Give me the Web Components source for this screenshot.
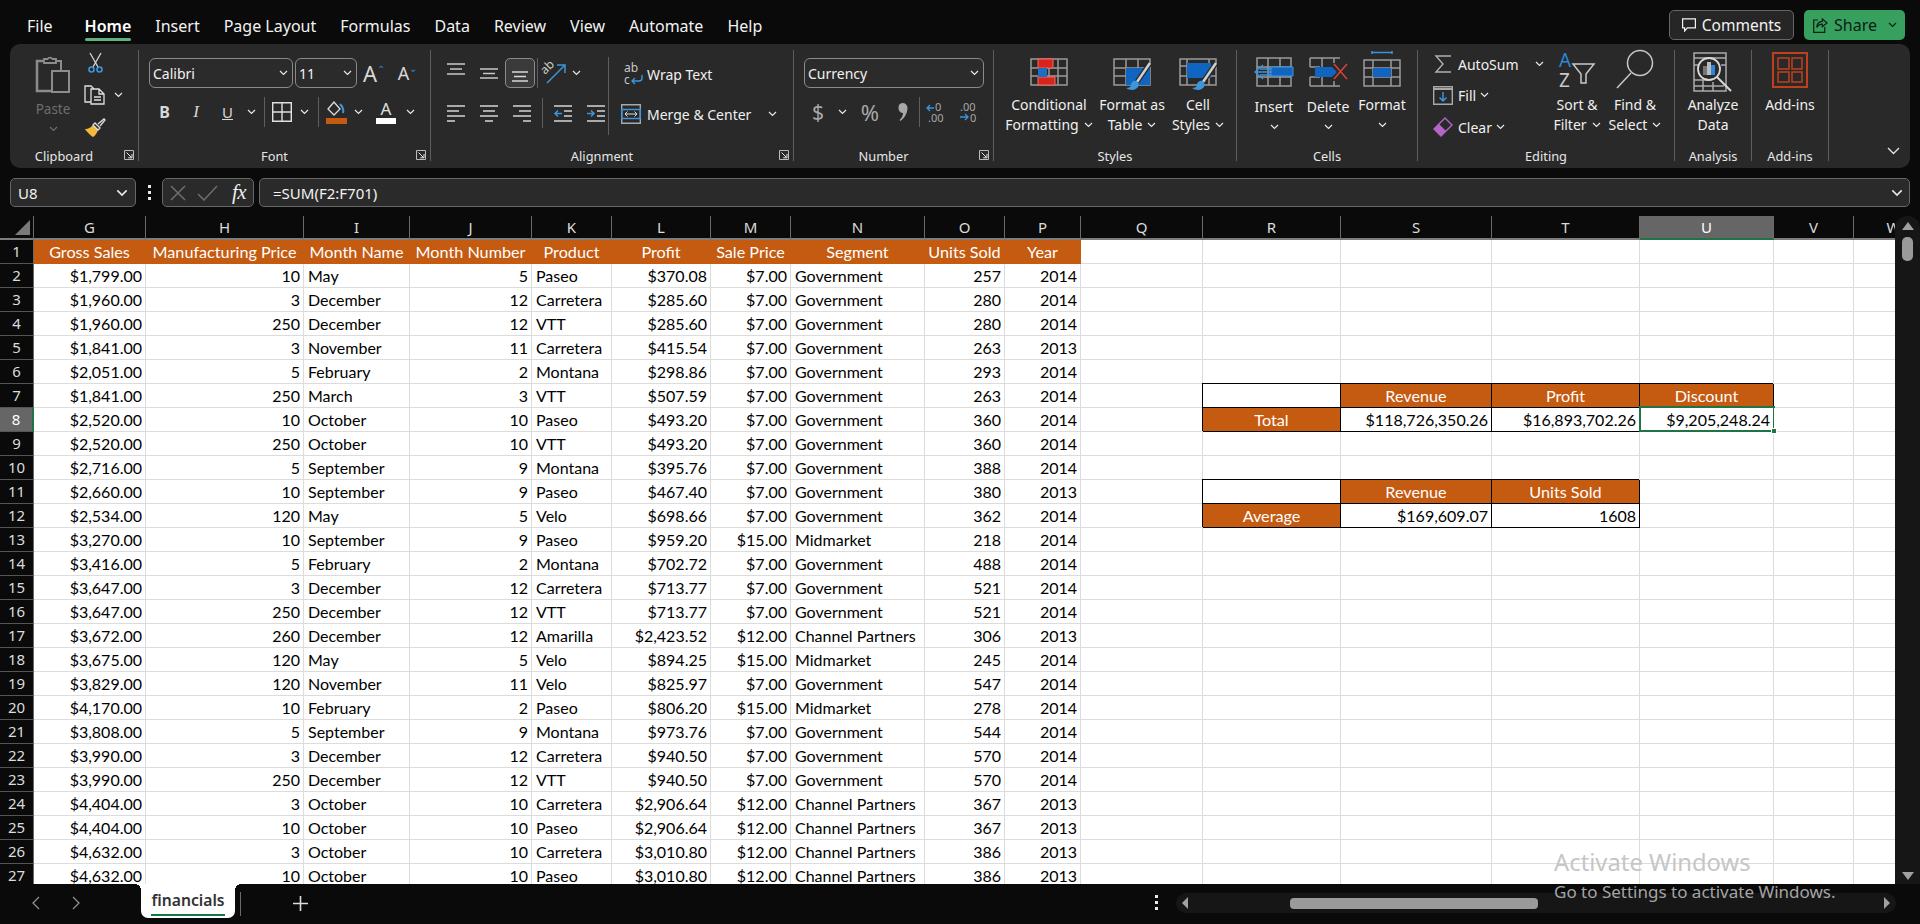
<!DOCTYPE html>
<html>
<head>
<meta charset="utf-8">
<title>financials - Excel</title>
<style>
  html, body { margin: 0; height: 924px; background: #0a0a0a; overflow: hidden; }
  body { position: relative; display: flex; flex-direction: column; font-family: "Noto Sans", "Open Sans", sans-serif; color: #f0f0f0; font-size: 14px; }

  /* ribbon content lives in the light DOM and is passed through slots */
  .rowgrid { display: grid; align-items: center; justify-items: center; height: 30px; }
  .sep { width: 1px; height: 30px; background: #5e5e5e; }
  .line { display: flex; align-items: center; }
  .stack { display: flex; flex-direction: column; }
  .glyph { font-size: 15px; line-height: 30px; color: #d8d8d8; }
  svg { display: block; overflow: visible; }
  svg text { font-family: "Noto Sans", sans-serif; }
  .selbox { width: 30px; height: 30px; box-sizing: border-box; border: 1px solid #8c8c8c; border-radius: 5px; background: #3a3a3a; display: flex; align-items: center; justify-content: center; }
</style>
</head>
<body>

<template id="titlebar-tpl">
  <style>
    :host { display: flex; align-items: flex-start; height: 44px; flex: none; color: #f2f2f2; }
    nav { display: flex; padding-left: 27px; }
    nav span { position: relative; font-size: 16px; line-height: 52px; height: 44px; margin-right: 24px; white-space: nowrap; }
    nav span.first { margin-right: 32px; }
    nav span.on { font-weight: 600; color: #fff; }
    nav span.on::after { content: ""; position: absolute; left: 0; right: 0; top: 38px; height: 3px; border-radius: 2px; background: #5fb37c; }
    .right { margin-left: auto; display: flex; gap: 10px; padding: 10px 15px 0 0; }
    .btn { height: 30px; box-sizing: border-box; display: flex; align-items: center; border-radius: 5px; font-size: 15.500px; }
    .comments { width: 125px; justify-content: center; gap: 6px; background: #262626; border: 1px solid #666; color: #f2f2f2; }
    .share { width: 101px; background: #37a05f; color: #0c2014; padding-left: 9px; gap: 6px; font-size: 16px; }
    .share b { font-weight: 400; }
    .share xl-chev { margin-left: 5px; --chev: #0c2014; }
  </style>
  <nav>
    <span class="first">File</span><span class="on">Home</span><span>Insert</span><span>Page Layout</span><span>Formulas</span><span>Data</span><span>Review</span><span>View</span><span>Automate</span><span>Help</span>
  </nav>
  <div class="right">
    <div class="btn comments">
      <svg width="14" height="14" viewBox="0 0 14 14" fill="none" stroke="#f2f2f2" stroke-width="1.2"><path d="M.6.8h12.8v9H5.4L2.6 13v-3.2h-2z"/></svg>
      Comments
    </div>
    <div class="btn share">
      <svg width="15" height="15" viewBox="0 0 15 15" fill="none" stroke="#0c2014" stroke-width="1.2"><path d="M5 2H.7v12.3h11V9"/><path d="M14 5 9.3.9v2.5C6 3.5 4 6 3.8 9.5c1.3-2.4 3-3.4 5.5-3.3v2.6z"/></svg>
      <b>Share</b><xl-chev></xl-chev>
    </div>
  </div>
</template>

<template id="ribbon-tpl">
  <style>
    :host { display: flex; flex: none; position: relative; height: 124px; margin: 0 10px; box-sizing: border-box; padding-top: 6px; background: #292929; border-radius: 10px; color: #f0f0f0; }
    .collapse { margin: 97px 0 0 58px; }
  </style>
  <slot></slot>
  <svg class="collapse" width="13" height="8" viewBox="0 0 13 8" fill="none" stroke="#e6e6e6" stroke-width="1.3"><path d="M1 1l5.500 5.500L12 1"/></svg>
</template>

<template id="group-tpl">
  <style>
    :host { display: flex; flex-direction: column; flex: none; height: 111px; box-sizing: border-box; border-right: 1px solid #5e5e5e; }
    .body { height: 99px; flex: none; }
    .foot { height: 14px; flex: none; display: grid; grid-template-columns: 1fr; align-items: center; font-size: 12.800px; line-height: 14px; text-align: center; color: #e6e6e6; white-space: nowrap; }
    :host([launcher]) .foot { grid-template-columns: 1fr 20px; }
    .launch { display: none; }
    :host([launcher]) .launch { display: block; margin: -3px 0 0 6px; }
  </style>
  <div class="body"><slot></slot></div>
  <div class="foot">
    <span id="label"></span>
    <svg class="launch" width="10" height="10" viewBox="0 0 10 10" fill="none" stroke="#bcbcbc" stroke-width="1"><path d="M.5 9.500V.5h9v9z"/><path d="M2.500 2.500l5 5M8 4v3.800H4.200" stroke="#e8e8e8"/></svg>
  </div>
</template>

<template id="big-tpl">
  <style>
    :host { display: flex; flex-direction: column; align-items: center; flex: none; font-size: 14px; line-height: 20px; color: #f0f0f0; text-align: center; white-space: nowrap; }
    .icon { height: 45px; display: flex; align-items: flex-start; justify-content: center; padding-top: 4px; box-sizing: border-box; width: 100%; }
    .l { display: flex; align-items: center; gap: 5px; height: 20px; }
  </style>
  <div class="icon"><slot></slot></div>
  <div class="l" id="a"></div>
  <div class="l" id="b"></div>
</template>

<template id="select-tpl">
  <style>
    :host { display: flex; align-items: center; flex: none; height: 30px; box-sizing: border-box; border: 1px solid #8a8a8a; border-radius: 6px; padding: 0 4px 0 3px; font-size: 14px; color: #f2f2f2; background: #2b2b2b; }
    span { flex: 1; }
  </style>
  <span><slot></slot></span><xl-chev></xl-chev>
</template>

<template id="formula-tpl">
  <style>
    :host { display: flex; flex: none; height: 29px; margin: 10px 10px 9px; font-size: 15px; color: #f2f2f2; }
    .box { box-sizing: border-box; height: 29px; border: 1px solid #676767; border-radius: 5px; background: #2a2a2a; display: flex; align-items: center; }
    .name { width: 126px; padding: 0 7px; justify-content: space-between; }
    .dots { width: 26px; display: flex; flex-direction: column; align-items: center; justify-content: center; gap: 3px; }
    .dots i { width: 3px; height: 3px; background: #e8e8e8; }
    .acts { width: 92px; padding-left: 7px; }
    .fx { font-family: "Liberation Serif", serif; font-style: italic; font-size: 21px; margin-left: 14px; color: #ececec; letter-spacing: -.5px; }
    .input { flex: 1; margin-left: 5px; padding: 0 6px 0 13px; justify-content: space-between; }
  </style>
  <div class="box name">U8<xl-chev style="--chev-w:12px"></xl-chev></div>
  <div class="dots"><i></i><i></i><i></i></div>
  <div class="box acts">
    <svg width="16" height="16" viewBox="0 0 16 16" stroke="#6e6e6e" stroke-width="1.5"><path d="M1 1l14 14M15 1 1 15"/></svg>
    <svg style="margin-left:11px" width="21" height="16" viewBox="0 0 21 16" fill="none" stroke="#6e6e6e" stroke-width="1.5"><path d="M1 9l6 6L20 1"/></svg>
    <span class="fx">fx</span>
  </div>
  <div class="box input">=SUM(F2:F701)<xl-chev style="--chev-w:12px"></xl-chev></div>
</template>

<template id="sheet-tpl">
  <style>
    :host { display: flex; flex: none; height: 668px; overflow: hidden; font-family: Lato, "Liberation Sans", sans-serif; font-size: 16px; color: #000; }
    .wrap { width: 1895px; height: 668px; overflow: hidden; flex: none; background: #fff; }
    .grid { display: grid; grid-template-columns: 34px 112px 158px 106px 122px 80px 99px 80px 134px 80px 76px 122px 138px 151px 148px 134px 80px 80px; grid-auto-rows: 24px; width: 2056px; }
    .c { box-sizing: border-box; border-right: 1px solid #dcdcdc; border-bottom: 1px solid #dcdcdc; padding: 0 3px 0 4px; line-height: 23px; white-space: nowrap; background: #fff; position: relative; }
    .r { text-align: right; }
    .o { background: #c55a11; color: #fff; text-align: center; border-color: #c55a11; padding: 0; font-size: 16.200px; }
    .b { border-color: #000; box-shadow: -1px -1px 0 #000; }
    .ch, .rh { background: #0a0a0a; color: #dcdcdc; font-family: "Noto Sans", sans-serif; font-size: 15px; text-align: center; padding: 0; box-sizing: border-box; }
    .ch { border-right: 1px solid #6a6a6a; border-bottom: 2px solid #7d7d7d; line-height: 22px; }
    .rh { border-right: 1px solid #6a6a6a; border-bottom: 1px solid #555; line-height: 23px; }
    .corner { display: flex; align-items: flex-end; justify-content: flex-end; padding: 0 3px 3px 0; }
    .act { background: #666; color: #fff; }
    .ch.act { border-bottom-color: #217346; }
    .rh.act { border-right: 2px solid #217346; }
    .sel::after { content: ""; position: absolute; left: -1px; right: -2px; top: -2px; bottom: -1px; border: 2px solid #217346; }
    .sel::before { content: ""; position: absolute; right: -4px; bottom: -3px; width: 6px; height: 6px; background: #217346; border: 1px solid #fff; z-index: 1; box-sizing: border-box; }
    .vs { width: 25px; flex: none; height: 672px; background: #161616; border-radius: 12px 12px 0 0; position: relative; display: flex; flex-direction: column; align-items: center; }
    .up { width: 0; height: 0; border: 6px solid transparent; border-top: 0; border-bottom: 8px solid #a0a0a0; margin-top: 6px; }
    .thumb { width: 11px; height: 24px; border-radius: 5px; background: #9a9a9a; margin-top: 7px; }
    .dn { width: 0; height: 0; border: 6px solid transparent; border-bottom: 0; border-top: 8px solid #a0a0a0; margin-top: auto; margin-bottom: 8px; }
  </style>
  <div class="wrap"><div class="grid" id="grid"></div></div>
  <div class="vs"><div class="up"></div><div class="thumb"></div><div class="dn"></div></div>
</template>

<template id="tabs-tpl">
  <style>
    :host { display: flex; flex: none; height: 40px; align-items: flex-start; position: relative; background: #0a0a0a; color: #e8e8e8; }
    .nav { display: flex; width: 141px; height: 38px; align-items: center; padding-left: 31px; box-sizing: border-box; gap: 32px; }
    .tab { width: 94px; height: 34px; box-sizing: border-box; background: #fff; border-radius: 0 0 7px 7px; text-align: center; color: #333; font-weight: 600; font-size: 15.700px; line-height: 33px; position: relative; }
    .tab i { position: absolute; left: 10px; right: 10px; top: 30px; height: 2px; background: #107c41; }
    .tab::before, .tab::after { content: ""; position: absolute; top: 0; width: 6px; height: 6px; }
    .tab::before { left: -6px; background: radial-gradient(circle at 0 100%, transparent 6px, #fff 6px); }
    .tab::after { right: -6px; background: radial-gradient(circle at 100% 100%, transparent 6px, #fff 6px); }
    .vr { width: 1px; height: 24px; background: #6a6a6a; margin: 8px 0 0 5px; }
    .plus { margin: 12px 0 0 52px; }
    .dots { display: flex; flex-direction: column; gap: 3px; margin: 11px 0 0 847px; }
    .dots i { width: 3px; height: 3px; background: #e8e8e8; }
    .hs { width: 720px; height: 20px; margin: 9px 0 0 18px; background: #161616; border-radius: 10px; display: flex; align-items: center; padding: 0 6px; box-sizing: border-box; }
    .lt { width: 0; height: 0; border: 6px solid transparent; border-left: 0; border-right: 6px solid #a0a0a0; }
    .rt { width: 0; height: 0; border: 6px solid transparent; border-right: 0; border-left: 6px solid #a0a0a0; margin-left: auto; }
    .bar { width: 248px; height: 11px; border-radius: 4px; background: #9a9a9a; margin-left: 102px; }
  </style>
  <div class="nav">
    <svg width="9" height="14" viewBox="0 0 9 14" fill="none" stroke="#8f8f8f" stroke-width="1.3"><path d="M8 1 2 7l6 6"/></svg>
    <svg width="9" height="14" viewBox="0 0 9 14" fill="none" stroke="#8f8f8f" stroke-width="1.3"><path d="M1 1l6 6-6 6"/></svg>
  </div>
  <div class="tab">financials<i></i></div>
  <div class="vr"></div>
  <svg class="plus" width="15" height="15" viewBox="0 0 15 15" stroke="#dcdcdc" stroke-width="1.6"><path d="M7.500 0v15M0 7.500h15"/></svg>
  <div class="dots"><i></i><i></i><i></i></div>
  <div class="hs"><div class="lt"></div><div class="bar"></div><div class="rt"></div></div>
</template>

<template id="watermark-tpl">
  <style>
    :host { position: absolute; left: 1554px; top: 845px; pointer-events: none; white-space: nowrap; font-family: "Noto Sans", sans-serif; }
    div { font-size: 23.800px; line-height: 34px; color: #c6c6c6; }
    p { margin: 0; font-size: 17px; line-height: 26px; color: #a4a4a4; }
  </style>
  <div>Activate Windows</div>
  <p>Go to Settings to activate Windows.</p>
</template>

<xl-titlebar></xl-titlebar>

<xl-ribbon>
  <xl-group label="Clipboard" launcher style="width:129px">
    <div class="line" style="align-items:flex-start">
      <div class="stack" style="width:74px;align-items:center;margin-left:6px;color:#6e6e6e">
        <svg style="margin-top:5px" width="36" height="38" viewBox="0 0 36 38" fill="none" stroke="#8c8c8c"><path stroke-width="2.500" d="M9 6H2v30h14"/><path stroke-width="2" d="M26 15V6h-6"/><path stroke-width="1.800" d="M9 8V4h3.500a3 3 0 0 1 5 0H21v4z"/><path stroke-width="2" d="M17 16h17v21H17z"/></svg>
        <span style="margin-top:6px;font-size:13.500px;line-height:20px">Paste</span>
        <xl-chev style="--chev:#6e6e6e;margin-top:7px"></xl-chev>
      </div>
      <div class="stack" style="align-items:flex-start;margin-left:-9px">
        <svg style="margin:3px 0 0 7px" width="15" height="20" viewBox="0 0 15 20" fill="none"><path stroke="#d6d6d6" stroke-width="1.300" d="M2 0l8 14M13 0 5 14"/><circle cx="3.500" cy="16.500" r="2.500" stroke="#3d95dc" stroke-width="1.600"/><circle cx="11.500" cy="16.500" r="2.500" stroke="#3d95dc" stroke-width="1.600"/></svg>
        <div class="line" style="margin-top:12px">
          <svg style="margin-left:3px" width="21" height="20" viewBox="0 0 21 20" fill="none" stroke="#e0e0e0" stroke-width="1.300"><path d="M7 17H1V1h6l3 3"/><path d="M7 4h8l5 5v10H7zM15 4v5h5M10 12h7M10 15h7"/></svg>
          <xl-chev style="margin-left:9px"></xl-chev>
        </div>
        <svg style="margin:13px 0 0 3px" width="22" height="20" viewBox="0 0 22 20"><path d="M1 11c4 0 6-2 8-4l5 5c-1 3-3 6-5 7-2-1-6-5-8-8z" fill="#f0b93c"/><path d="M9 7l5 5 2-2-5-5zM14 6l6-5 1 1-5 6" fill="none" stroke="#e0e0e0" stroke-width="1.300"/></svg>
      </div>
    </div>
  </xl-group>

  <xl-group label="Font" launcher style="width:292px">
    <div class="line" style="padding:8px 0 0 10px">
      <xl-select style="width:144px">Calibri</xl-select>
      <xl-select style="width:62px;margin-left:2px">11</xl-select>
      <span style="width:34px;text-align:center;font-size:22px;line-height:26px;color:#d8d8d8">A<sup style="font-size:10px;color:#2b88d8;vertical-align:9px;line-height:0">&#8963;</sup></span>
      <span style="width:33px;text-align:center;font-size:18px;line-height:26px;color:#d8d8d8">A<sup style="font-size:10px;color:#2b88d8;vertical-align:8px;line-height:0">&#8964;</sup></span>
    </div>
    <div class="rowgrid" style="margin:9px 0 0 10px;grid-template-columns:31px 32px 31px 16px 10px 26px 19px 8px 28px 17px 38px 10px;width:266px">
      <b class="glyph" style="font-size:16px">B</b>
      <i class="glyph" style="font-family:'Liberation Serif',serif;font-size:17px">I</i>
      <u class="glyph">U</u>
      <xl-chev></xl-chev>
      <div class="sep"></div>
      <svg width="20" height="20" viewBox="0 0 20 20" fill="none" stroke="#e0e0e0" stroke-width="1.400"><path d="M.7.7h18.600v18.600H.7zM10 .7v18.600M.7 10h18.600"/></svg>
      <xl-chev></xl-chev>
      <div class="sep"></div>
      <svg width="21" height="23" viewBox="0 0 21 23"><path d="M8 1 2 8l6 6 6-6z" fill="none" stroke="#dcdcdc" stroke-width="1.300"/><path d="M14 3c2 2 4 5 3 9" fill="none" stroke="#3d95dc" stroke-width="2"/><rect y="17" width="21" height="6" fill="#c55a11"/></svg>
      <xl-chev></xl-chev>
      <div class="stack" style="align-items:center"><span style="font-size:17px;line-height:17px;color:#e0e0e0">A</span><span style="width:20px;height:6px;margin-top:1px;background:#fff"></span></div>
      <xl-chev></xl-chev>
    </div>
  </xl-group>

  <xl-group label="Alignment" launcher style="width:363px">
    <div class="line" style="align-items:flex-start">
      <div style="width:178px;height:78px;margin-top:7px;padding:1px 0 0 8px;box-sizing:border-box;border-right:1px solid #5e5e5e">
        <div class="rowgrid" style="grid-template-columns:33px 33px 30px 3px 34px 8px;width:141px">
          <svg style="margin-top:-8px" width="18" height="12" viewBox="0 0 18 12" stroke="#c8c8c8" stroke-width="1.500"><path d="M0 1h18M3 6h12M0 11h18"/></svg>
          <svg width="18" height="11" viewBox="0 0 18 11" stroke="#c8c8c8" stroke-width="1.500"><path d="M0 1h18M3 5.500h12M0 10h18"/></svg>
          <div class="selbox"><svg style="margin-top:6px" width="18" height="11" viewBox="0 0 18 11" stroke="#d8d8d8" stroke-width="1.500"><path d="M1 1h16M3 5.500h12M1 10h16"/></svg></div>
          <div class="sep" style="margin-left:1px"></div>
          <svg width="22" height="22" viewBox="0 0 22 22"><text transform="translate(1 13) rotate(-45)" font-size="12" fill="#d0d0d0">ab</text><path d="M3 21 20 4M13 3h8v8" fill="none" stroke="#3d95dc" stroke-width="1.500"/></svg>
          <xl-chev></xl-chev>
        </div>
        <div class="rowgrid" style="margin-top:10px;grid-template-columns:33px 33px 33px 8px 33px 33px;width:173px;justify-content:start">
          <svg width="18" height="17" viewBox="0 0 18 17" stroke="#aaa" stroke-width="1.800"><path d="M0 1h18M0 6h12M0 11h18M0 16h8"/></svg>
          <svg width="18" height="17" viewBox="0 0 18 17" stroke="#aaa" stroke-width="1.800"><path d="M0 1h18M3 6h12M0 11h18M5 16h8"/></svg>
          <svg width="18" height="17" viewBox="0 0 18 17" stroke="#aaa" stroke-width="1.800"><path d="M0 1h18M6 6h12M0 11h18M10 16h8"/></svg>
          <div class="sep"></div>
          <svg width="18" height="17" viewBox="0 0 18 17" fill="none" stroke-width="1.800"><path stroke="#aaa" d="M0 1h18M10 6h8M10 11h8M0 16h18"/><path stroke="#3d95dc" stroke-width="1.500" d="M8 8.500H1M4 5.500 1 8.500l3 3"/></svg>
          <svg width="18" height="17" viewBox="0 0 18 17" fill="none" stroke-width="1.800"><path stroke="#aaa" d="M0 1h18M10 6h8M10 11h8M0 16h18"/><path stroke="#3d95dc" stroke-width="1.500" d="M0 8.500h7M4 5.500l3 3-3 3"/></svg>
        </div>
      </div>
      <div class="stack">
        <div class="line" style="height:30px;margin-top:9px;font-size:14px">
          <svg style="margin-left:15px" width="20" height="22" viewBox="0 0 20 22"><text x="0" y="9" font-size="12" fill="#c8c8c8">ab</text><text x="0" y="21" font-size="12" fill="#c8c8c8">c</text><path d="M18 12v3a3 3 0 0 1-3 3H8M11 15l-3 3 3 3" fill="none" stroke="#3d95dc" stroke-width="1.400"/></svg>
          <span style="margin-left:3px">Wrap Text</span>
        </div>
        <div class="line" style="height:30px;margin-top:10px;font-size:14px">
          <svg style="margin-left:12px" width="20" height="20" viewBox="0 0 20 20" fill="none"><path d="M.7.7h18.600v18.600H.7z" stroke="#a8a8a8" stroke-width="1.400"/><path d="M.7 5.500h18.600v9H.7z" stroke="#3d95dc" stroke-width="1.500"/><path d="M4 10h12M6.500 7.500 4 10l2.500 2.500M13.500 7.500 16 10l-2.500 2.500" stroke="#e0e0e0"/></svg>
          <span style="margin-left:6px">Merge &amp; Center</span>
          <xl-chev style="margin-left:17px"></xl-chev>
        </div>
      </div>
    </div>
  </xl-group>

  <xl-group label="Number" launcher style="width:200px">
    <div style="padding:8px 0 0 10px"><xl-select style="width:180px">Currency</xl-select></div>
    <div class="rowgrid" style="margin:9px 0 0 10px;grid-template-columns:28px 20px 36px 30px 2px 32px 32px;width:180px">
      <span class="glyph" style="font-size:21px;color:#a8a8a8">$</span>
      <xl-chev></xl-chev>
      <span class="glyph" style="font-size:22px;color:#a8a8a8">%</span>
      <svg width="10" height="18" viewBox="0 0 10 18"><path d="M4.500 0a4.800 4.800 0 0 1 5 5c0 5-3 10-7 13l-1-1c2-2 3.500-4 3.500-7a4.800 4.800 0 0 1-4.500-5A4.800 4.800 0 0 1 4.500 0z" fill="#a8a8a8"/></svg>
      <div class="sep"></div>
      <svg width="20" height="20" viewBox="0 0 20 20"><text x="9" y="9" font-size="11" fill="#a8a8a8">0</text><text x="2" y="20" font-size="11" fill="#a8a8a8">.00</text><path d="M8 6H1M4 3 1 6l3 3" fill="none" stroke="#3d95dc" stroke-width="1.300"/></svg>
      <svg width="20" height="20" viewBox="0 0 20 20"><text x="2" y="9" font-size="11" fill="#a8a8a8">.00</text><text x="12" y="20" font-size="11" fill="#a8a8a8">0</text><path d="M2 15h8M7 12l3 3-3 3" fill="none" stroke="#3d95dc" stroke-width="1.300"/></svg>
    </div>
  </xl-group>

  <xl-group label="Styles" style="width:243px">
    <div class="line" style="padding-left:9px;align-items:flex-start">
      <xl-big a="Conditional" b="Formatting" chev style="width:92px">
        <svg width="38" height="40" viewBox="0 0 38 40" fill="none"><path d="M1 5h36v26H1zM1 14h36M1 22h36M10 5v26M19 5v26M28 5v26" stroke="#9a9a9a" stroke-width="1.500"/><path d="M8 5h15v9H8zM8 23h17v8H8z" fill="#d8241c" stroke="#f06a62"/><path d="M8 14h9v9H8z" fill="#1e6fc4"/></svg>
      </xl-big>
      <xl-big a="Format as" b="Table" chev style="width:74px">
        <svg width="38" height="40" viewBox="0 0 38 40" fill="none"><path d="M1 5h36v26H1zM1 14h36M1 22h36M13 5v26M25 5v26" stroke="#9a9a9a" stroke-width="1.500"/><path d="M13 14h24v17H13z" fill="#1065c0"/><path d="M37 9 24 28" stroke="#292929" stroke-width="5"/><path d="M37 9 24 28" stroke="#d0d0d0" stroke-width="2.500"/><path d="M24 27c-4-1-6 2-6 4s-2 3-5 3c4 3 11 3 13-3z" fill="#3d95dc"/></svg>
      </xl-big>
      <xl-big a="Cell" b="Styles" chev style="width:58px">
        <svg width="38" height="40" viewBox="0 0 38 40" fill="none"><path d="M1 5h36v26H1zM1 12h36M1 22h36M8 5v26M30 5v26" stroke="#9a9a9a" stroke-width="1.500"/><path d="M8 9h24v15H8z" fill="#1065c0"/><path d="M37 9 24 28" stroke="#292929" stroke-width="5"/><path d="M37 9 24 28" stroke="#d0d0d0" stroke-width="2.500"/><path d="M24 27c-4-1-6 2-6 4s-2 3-5 3c4 3 11 3 13-3z" fill="#3d95dc"/></svg>
      </xl-big>
    </div>
  </xl-group>

  <xl-group label="Cells" style="width:181px">
    <div class="line" style="padding-left:10px;align-items:flex-start">
      <xl-big a="Insert" b="" chev style="width:54px;--low:2px">
        <svg width="40" height="40" viewBox="0 0 40 40" fill="none"><path d="M3 4h34v28H3zM3 13h34M3 23h34M14 4v28M26 4v28" stroke="#9a9a9a" stroke-width="1.500"/><path d="M16 13h23v9H16z" fill="#1065c0" stroke="#3d95dc"/><path d="M18 18H1M9 11l-8 7 8 7M18 15H6M18 21H6" stroke="#3d95dc" stroke-width="1.300"/></svg>
      </xl-big>
      <xl-big a="Delete" b="" chev style="width:54px;--low:2px">
        <svg width="40" height="40" viewBox="0 0 40 40" fill="none"><path d="M2 4h30M2 32h30M2 4v9M2 23v9M14 4v9M14 23v9M26 4v5M26 27v5M2 13h10M2 23h10" stroke="#9a9a9a" stroke-width="1.500"/><path d="M7 13h17l5 5-5 5H7z" fill="#1065c0"/><path d="M26 10l13 15M39 10 26 25" stroke="#e0403a" stroke-width="1.500"/></svg>
      </xl-big>
      <xl-big a="Format" b="" chev style="width:54px">
        <svg width="38" height="40" viewBox="0 0 38 40" fill="none" style="margin-top:-4px"><path d="M1 10h36v26H1zM1 18h36M1 27h36M10 10v26M28 10v26" stroke="#9a9a9a" stroke-width="1.500"/><path d="M10 18h18v9H10z" fill="#1065c0"/><path d="M9 1v3M29 1v3M9 2.500h20" stroke="#3d95dc" stroke-width="1.500"/></svg>
      </xl-big>
    </div>
  </xl-group>

  <xl-group label="Editing" style="width:257px">
    <div class="line" style="padding-left:15px;align-items:flex-start">
      <div class="stack" style="width:115px;font-size:14px">
        <div class="line" style="height:28px">
          <svg style="margin-left:2px" width="16" height="18" viewBox="0 0 16 18" fill="none" stroke="#b0b0b0" stroke-width="1.400"><path d="M16 1H1l7 8-7 8h15"/></svg>
          <span style="margin-left:7px">AutoSum</span>
          <xl-chev style="margin-left:16px"></xl-chev>
        </div>
        <div class="line" style="height:34px">
          <svg width="20" height="19" viewBox="0 0 20 19" fill="none"><path d="M.7.7h18.600v17.600H.7z" stroke="#a8a8a8" stroke-width="1.400"/><path d="M.7 3h18.600" stroke="#a8a8a8" stroke-width="2"/><path d="M10 6v9M6.500 11.500 10 15l3.500-3.500" stroke="#3d95dc" stroke-width="1.500"/></svg>
          <span style="margin-left:5px">Fill</span>
          <xl-chev style="margin-left:4px"></xl-chev>
        </div>
        <div class="line" style="height:30px">
          <svg width="20" height="20" viewBox="0 0 20 20"><path d="M1 12 12 1l7 7-11 11z" fill="none" stroke="#b565c8" stroke-width="1.400"/><path d="M1 12l5-5 7 7-5 5z" fill="#b565c8"/></svg>
          <span style="margin-left:5px">Clear</span>
          <xl-chev style="margin-left:4px"></xl-chev>
        </div>
      </div>
      <xl-big a="Sort &amp;" b="Filter" chev style="width:58px">
        <svg width="38" height="38" viewBox="0 0 38 38" fill="none" style="margin-top:-3px"><text x="1" y="16" font-size="19" fill="#2b88d8">A</text><text x="1" y="36" font-size="19" fill="#c8c8c8">Z</text><path d="M15 13h21l-8 10v9h-5v-9z" stroke="#c8c8c8" stroke-width="1.500"/></svg>
      </xl-big>
      <xl-big a="Find &amp;" b="Select" chev style="width:58px">
        <svg width="38" height="38" viewBox="0 0 38 38" fill="none" style="margin-top:-4px"><circle cx="24" cy="13" r="12.500" stroke="#c8c8c8" stroke-width="1.500"/><path d="M15 23 1 38" stroke="#c8c8c8" stroke-width="1.500"/></svg>
      </xl-big>
    </div>
  </xl-group>

  <xl-group label="Analysis" style="width:77px">
    <xl-big a="Analyze" b="Data" style="width:76px">
      <svg width="40" height="40" viewBox="0 0 40 40" fill="none" style="margin-top:-2px"><path d="M1 1h32v38H1zM1 6h32M1 13h6M28 13h5M1 28h14M1 34h30M10 28v11M20 30v9" stroke="#aaa" stroke-width="1.500"/><circle cx="16" cy="17" r="11" fill="#292929" stroke="#d8d8d8" stroke-width="1.800"/><path d="M10 14h4v9h-4z" fill="#777"/><path d="M14 10h4v13h-4z" fill="#bbb"/><path d="M18 13h4v10h-4z" fill="#2b88d8"/><path d="M24 25 38 39" stroke="#d8d8d8" stroke-width="2"/></svg>
    </xl-big>
  </xl-group>

  <xl-group label="Add-ins" style="width:77px">
    <xl-big a="Add-ins" b="" style="width:76px">
      <svg width="36" height="36" viewBox="0 0 36 36" fill="none" style="margin-top:-2px" stroke="#c0401c"><path stroke-width="2" d="M1 1h34v34H1z"/><path stroke-width="1.500" d="M6 6h11v11H6zM20 6h10v11H20zM6 20h11v10H6zM20 20h10v10H20z"/></svg>
    </xl-big>
  </xl-group>
</xl-ribbon>

<xl-formula></xl-formula>
<xl-sheet></xl-sheet>
<xl-tabs></xl-tabs>
<xl-watermark></xl-watermark>

<script>
function mount(el, id) {
    const shadow = el.attachShadow({mode: 'open'});
    shadow.append(document.getElementById(id).content.cloneNode(true));
    return shadow;
}

class XlChev extends HTMLElement {
    constructor() {
        super();
        this.attachShadow({mode: 'open'}).innerHTML = `
            <style>
                :host { display: block; flex: none; line-height: 0; }
                svg { display: block; width: var(--chev-w, 9px); height: auto; }
            </style>
            <svg viewBox="0 0 9 6" fill="none" stroke="var(--chev, #e8e8e8)" stroke-width="1.200"><path d="M1 1l3.500 3.500L8 1"/></svg>`;
    }
}

class XlTitlebar extends HTMLElement {
    constructor() { super(); mount(this, 'titlebar-tpl'); }
}

class XlRibbon extends HTMLElement {
    constructor() { super(); mount(this, 'ribbon-tpl'); }
}

class XlGroup extends HTMLElement {
    constructor() { super(); mount(this, 'group-tpl'); }
    connectedCallback() {
        this.shadowRoot.querySelector('#label').textContent = this.getAttribute('label');
    }
}

class XlBig extends HTMLElement {
    constructor() { super(); mount(this, 'big-tpl'); }
    connectedCallback() {
        const a = this.shadowRoot.querySelector('#a');
        const b = this.shadowRoot.querySelector('#b');
        a.textContent = this.getAttribute('a');
        a.style.marginTop = 'var(--low, 0px)';
        b.textContent = this.getAttribute('b');
        if (this.hasAttribute('chev')) {
            b.append(document.createElement('xl-chev'));
        }
    }
}

class XlSelect extends HTMLElement {
    constructor() { super(); mount(this, 'select-tpl'); }
}

class XlFormula extends HTMLElement {
    constructor() { super(); mount(this, 'formula-tpl'); }
}

const G = 'Government', MM = 'Midmarket', CP = 'Channel Partners';
const ROWS = [
    ['$1,799.00', 10, 'May', 5, 'Paseo', '$370.08', '$7.00', G, 257, 2014],
    ['$1,960.00', 3, 'December', 12, 'Carretera', '$285.60', '$7.00', G, 280, 2014],
    ['$1,960.00', 250, 'December', 12, 'VTT', '$285.60', '$7.00', G, 280, 2014],
    ['$1,841.00', 3, 'November', 11, 'Carretera', '$415.54', '$7.00', G, 263, 2013],
    ['$2,051.00', 5, 'February', 2, 'Montana', '$298.86', '$7.00', G, 293, 2014],
    ['$1,841.00', 250, 'March', 3, 'VTT', '$507.59', '$7.00', G, 263, 2014],
    ['$2,520.00', 10, 'October', 10, 'Paseo', '$493.20', '$7.00', G, 360, 2014],
    ['$2,520.00', 250, 'October', 10, 'VTT', '$493.20', '$7.00', G, 360, 2014],
    ['$2,716.00', 5, 'September', 9, 'Montana', '$395.76', '$7.00', G, 388, 2014],
    ['$2,660.00', 10, 'September', 9, 'Paseo', '$467.40', '$7.00', G, 380, 2013],
    ['$2,534.00', 120, 'May', 5, 'Velo', '$698.66', '$7.00', G, 362, 2014],
    ['$3,270.00', 10, 'September', 9, 'Paseo', '$959.20', '$15.00', MM, 218, 2014],
    ['$3,416.00', 5, 'February', 2, 'Montana', '$702.72', '$7.00', G, 488, 2014],
    ['$3,647.00', 3, 'December', 12, 'Carretera', '$713.77', '$7.00', G, 521, 2014],
    ['$3,647.00', 250, 'December', 12, 'VTT', '$713.77', '$7.00', G, 521, 2014],
    ['$3,672.00', 260, 'December', 12, 'Amarilla', '$2,423.52', '$12.00', CP, 306, 2013],
    ['$3,675.00', 120, 'May', 5, 'Velo', '$894.25', '$15.00', MM, 245, 2014],
    ['$3,829.00', 120, 'November', 11, 'Velo', '$825.97', '$7.00', G, 547, 2014],
    ['$4,170.00', 10, 'February', 2, 'Paseo', '$806.20', '$15.00', MM, 278, 2014],
    ['$3,808.00', 5, 'September', 9, 'Montana', '$973.76', '$7.00', G, 544, 2014],
    ['$3,990.00', 3, 'December', 12, 'Carretera', '$940.50', '$7.00', G, 570, 2014],
    ['$3,990.00', 250, 'December', 12, 'VTT', '$940.50', '$7.00', G, 570, 2014],
    ['$4,404.00', 3, 'October', 10, 'Carretera', '$2,906.64', '$12.00', CP, 367, 2013],
    ['$4,404.00', 10, 'October', 10, 'Paseo', '$2,906.64', '$12.00', CP, 367, 2013],
    ['$4,632.00', 3, 'October', 10, 'Carretera', '$3,010.80', '$12.00', CP, 386, 2013],
    ['$4,632.00', 10, 'October', 10, 'Paseo', '$3,010.80', '$12.00', CP, 386, 2013],
];
const HEADS = ['Gross Sales', 'Manufacturing Price', 'Month Name', 'Month Number', 'Product', 'Profit', 'Sale Price', 'Segment', 'Units Sold', 'Year'];
const LETTERS = 'GHIJKLMNOPQRSTUVW'.split('');
const LEFT_COLS = [2, 4, 7];

// the two small summary tables to the right of the data
const SIDE = {
    R7: ['b', ''], S7: ['o b', 'Revenue'], T7: ['o b', 'Profit'], U7: ['o b', 'Discount'],
    R8: ['o b', 'Total'], S8: ['r b', '$118,726,350.26'], T8: ['r b', '$16,893,702.26'], U8: ['r b sel', '$9,205,248.24'],
    R11: ['b', ''], S11: ['o b', 'Revenue'], T11: ['o b', 'Units Sold'],
    R12: ['o b', 'Average'], S12: ['r b', '$169,609.07'], T12: ['r b', '1608'],
};

class XlSheet extends HTMLElement {
    constructor() { super(); mount(this, 'sheet-tpl'); }

    connectedCallback() {
        const grid = this.shadowRoot.querySelector('#grid');
        const add = (cls, text) => {
            const d = document.createElement('div');
            d.className = cls;
            d.textContent = text;
            grid.append(d);
        };

        const corner = document.createElement('div');
        corner.className = 'ch corner';
        corner.innerHTML = '<svg width="15" height="15" viewBox="0 0 15 15"><path d="M15 0v15H0z" fill="#7a7a7a"/></svg>';
        grid.append(corner);
        LETTERS.forEach(l => add(l === 'U' ? 'ch act' : 'ch', l));

        for (let n = 1; n <= 27; n++) {
            add(n === 8 ? 'rh act' : 'rh', n);
            LETTERS.forEach((l, i) => {
                if (i < 10) {
                    if (n === 1) add('c o', HEADS[i]);
                    else add(LEFT_COLS.includes(i) ? 'c' : 'c r', ROWS[n - 2][i]);
                } else {
                    const side = SIDE[l + n];
                    add(side ? 'c ' + side[0] : 'c', side ? side[1] : '');
                }
            });
        }
    }
}

class XlTabs extends HTMLElement {
    constructor() { super(); mount(this, 'tabs-tpl'); }
}

class XlWatermark extends HTMLElement {
    constructor() { super(); mount(this, 'watermark-tpl'); }
}

customElements.define('xl-chev', XlChev);
customElements.define('xl-titlebar', XlTitlebar);
customElements.define('xl-ribbon', XlRibbon);
customElements.define('xl-group', XlGroup);
customElements.define('xl-big', XlBig);
customElements.define('xl-select', XlSelect);
customElements.define('xl-formula', XlFormula);
customElements.define('xl-sheet', XlSheet);
customElements.define('xl-tabs', XlTabs);
customElements.define('xl-watermark', XlWatermark);
</script>
</body>
</html>
